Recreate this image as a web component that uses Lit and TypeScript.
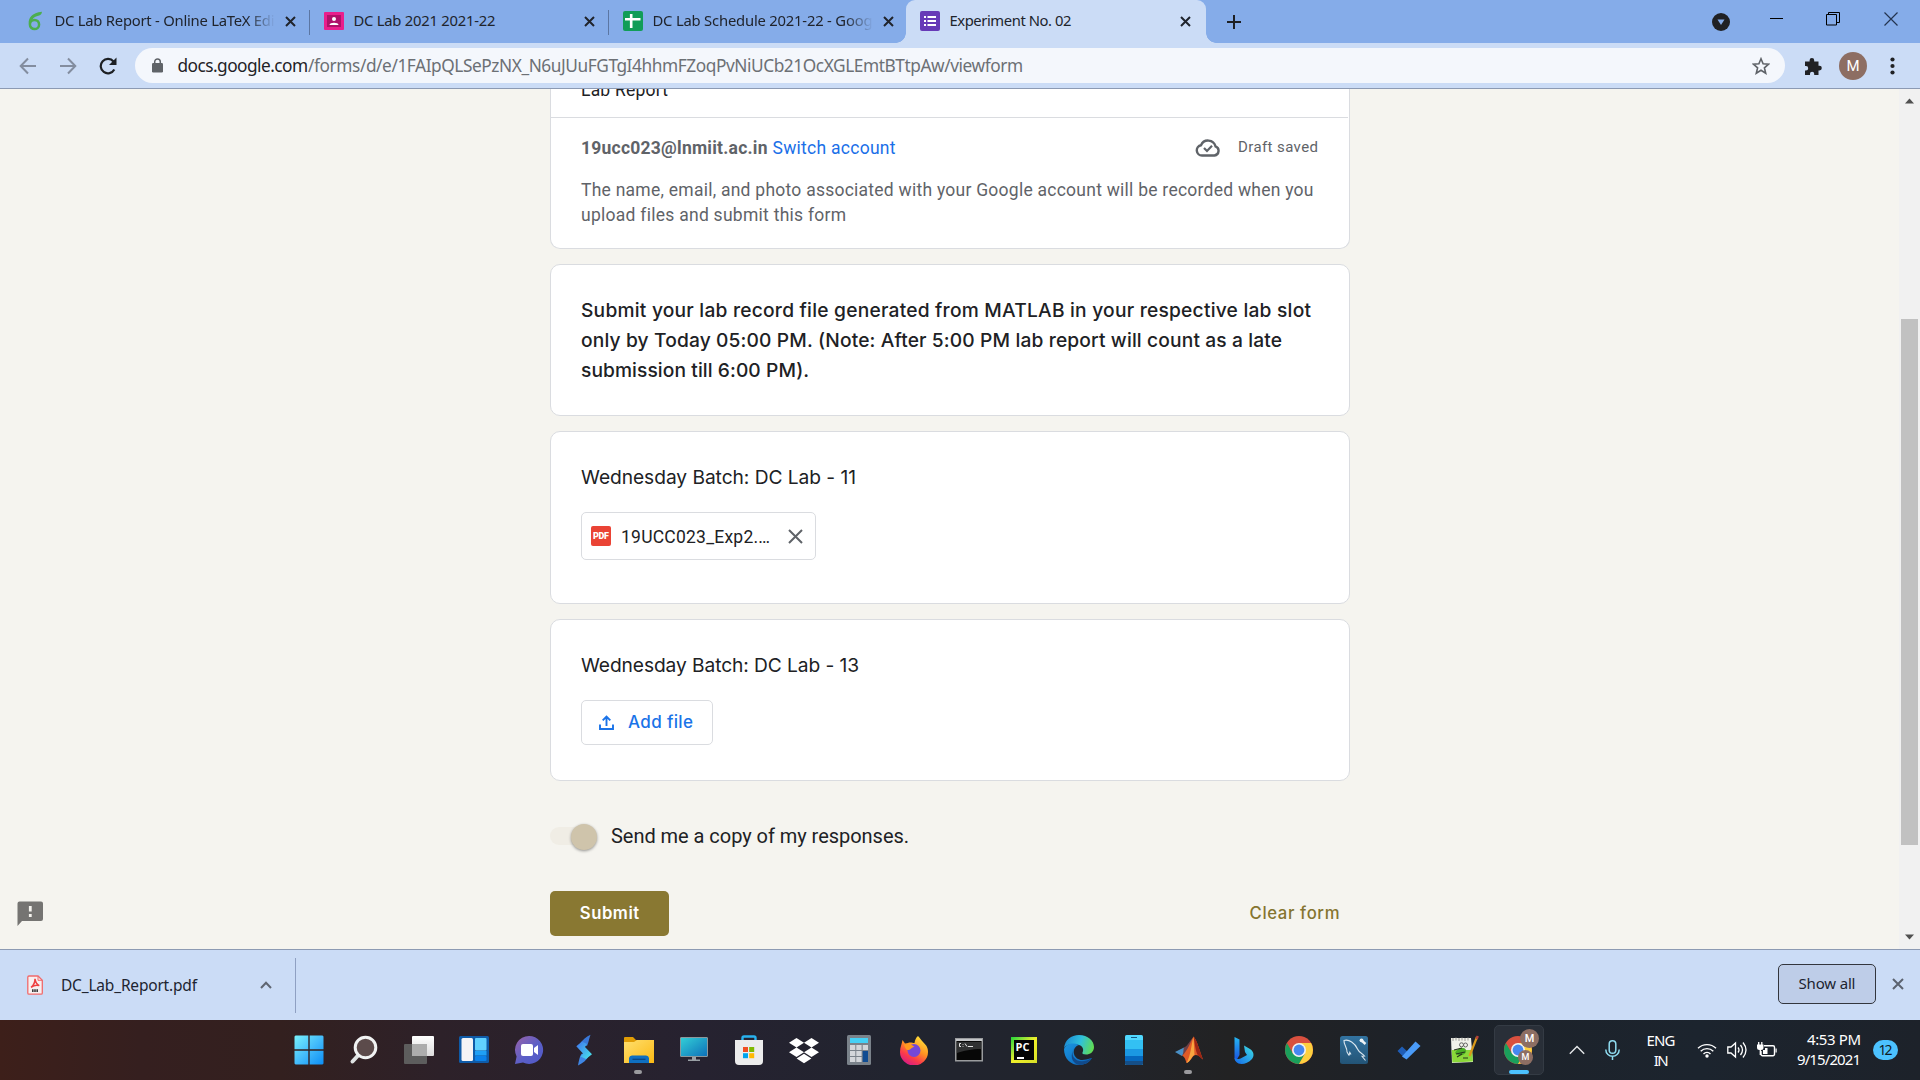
import { LitElement, html, svg, css, nothing } from "lit";
import { customElement, property } from "lit/decorators.js";
import { classMap } from "lit/directives/class-map.js";

/** One line of text whose tracking is adjusted so that it takes a given width. */
@customElement("fit-text")
class FitText extends LitElement {
  @property() text = "";
  @property({ type: Number }) w = 0;
  static styles = css`
    :host { display: inline-block; white-space: pre; flex: none; }
    .line { display: inline-block; }
  `;
  render() {
    return html`<span class="line">${this.text}</span>`;
  }
  updated() {
    const line = this.renderRoot.querySelector(".line") as HTMLElement;
    line.style.letterSpacing = "0px";
    const natural = line.getBoundingClientRect().width;
    const gaps = Math.max(1, this.text.length - 1);
    line.style.letterSpacing = (this.w - natural) / gaps + "px";
    this.style.width = this.w + "px";
  }
}

const icon = (w: number, h: number, body: unknown, box = `0 0 ${w} ${h}`) =>
  html`<svg width=${w} height=${h} viewBox=${box} fill="none">${body}</svg>`;

const cross = (size: number, color: string, sw: number) =>
  icon(size, size, svg`<path d="M1 1L${size - 1} ${size - 1}M${size - 1} 1L1 ${size - 1}" stroke=${color} stroke-width=${sw}/>`);

const favOverleaf = icon(20, 20, svg`
  <circle cx="9.500" cy="13.500" r="4.600" stroke="#4cae4f" stroke-width="2.500"/>
  <path d="M3.800 13C3 7 7 1.800 17 .8C16.800 3.400 15 4.600 12.500 5C9.500 5.600 7.500 7.500 7 10Z" fill="#4cae4f"/>`);
const favClass = icon(20, 20, svg`
  <rect width="20" height="18" y="1" rx="1" fill="#e91e8c"/><rect x="3" y="4" width="14" height="12" fill="#b0106a"/>
  <circle cx="10" cy="8" r="2" fill="#fff"/><path d="M5.500 14c0-3 9-3 9 0z" fill="#fff"/>`);
const favSheets = icon(20, 20, svg`
  <rect width="20" height="20" rx="2" fill="#119d58"/><path d="M8.200 3v14M2 8.200h15.500" stroke="#fff" stroke-width="2.600"/>`);
const favForms = icon(20, 20, svg`
  <rect width="20" height="20" rx="2" fill="#673ab7"/>
  <path d="M7.500 6h8.500M7.500 10h8.500M7.500 14h8.500M4 6h2M4 10h2M4 14h2" stroke="#fff" stroke-width="2"/>`);

const chromeBody = svg`
  <circle cx="14" cy="14" r="14" fill="#d9503f"/>
  <path d="M1.900 7A14 14 0 0 0 14 28L20.100 17.500H7.900Z" fill="#1a9f5b"/>
  <path d="M26.100 7A14 14 0 0 1 14 28L20.100 17.500L14 7Z" fill="#fdd03f"/>
  <circle cx="14" cy="14" r="7" fill="#f2f2f2"/><circle cx="14" cy="14" r="5.400" fill="#4688f0"/>`;

const start = icon(30, 30, svg`
  <defs><linearGradient id="wg" x1="0" y1="0" x2="30" y2="30" gradientUnits="userSpaceOnUse"><stop stop-color="#7af3fb"/><stop offset=".5" stop-color="#45bdfb"/><stop offset="1" stop-color="#0a8cf5"/></linearGradient></defs>
  <path d="M1.500.5H14.300V14.300H.5V1.500zM15.700.5H28.500L29.500 1.500V14.300H15.700zM.5 15.700H14.300V29.500H1.500L.5 28.500zM15.700 15.700H29.500V28.500L28.500 29.500H15.700z" fill="url(#wg)"/>`);
const search = icon(30, 30, svg`
  <path d="M9.500 20L3.500 26.500" stroke="#dfe3e3" stroke-width="4" stroke-linecap="round"/>
  <circle cx="16.500" cy="12.500" r="10.300" fill="#5c4b4b" stroke="#f1f3f3" stroke-width="3"/>`);
const taskView = icon(32, 30, svg`
  <defs><linearGradient id="tv" x1="0" y1="0" x2="0" y2="1"><stop stop-color="#fff"/><stop offset="1" stop-color="#dcdcdc"/></linearGradient></defs>
  <rect x="9" y="1" width="22" height="20" rx="1" fill="url(#tv)"/>
  <rect x="1" y="9" width="23" height="20" rx="1" fill="#5d5d5d"/><rect x="9" y="9" width="15" height="12" fill="#adadad"/>`);
const widgets = icon(30, 30, svg`
  <rect y="1" width="30" height="27" rx="1.500" fill="#0f5ba8"/><rect x="2.500" y="3" width="11.500" height="23" rx="1.500" fill="#f4f4f6"/>
  <rect x="16" y="3" width="11.500" height="12.500" rx="1" fill="#61d1ff"/><rect x="16" y="16" width="11.500" height="4.500" fill="#1fa0f5"/><rect x="16" y="21" width="11.500" height="5" rx="1" fill="#0b82ea"/>`);
const chat = icon(30, 30, svg`
  <defs><linearGradient id="ch" x1="0" y1="0" x2="1" y2="1"><stop stop-color="#9a62a8"/><stop offset=".55" stop-color="#5b5fc7"/><stop offset="1" stop-color="#5059c9"/></linearGradient></defs>
  <path d="M15 1a14 14 0 1 1-6 26.600L1 29L2.600 21.500A14 14 0 0 1 15 1z" fill="url(#ch)"/>
  <rect x="7" y="9" width="12" height="12" rx="2" fill="#fff"/><path d="M20 13l4-3v10l-4-3z" fill="#fff"/>`);
const bolt = icon(20, 32, svg`
  <defs><linearGradient id="bo" x1="2" y1="10" x2="17" y2="22" gradientUnits="userSpaceOnUse"><stop stop-color="#3f79ee"/><stop offset="1" stop-color="#47dcea"/></linearGradient></defs>
  <path d="M16.500.8C12 3 8 6.500 6 9.500L13 12C14.500 9 15 5 16.500.8z" fill="#3a78d8"/>
  <path d="M4 31.500C9 29 12.500 26 14.500 22.500L8 19.500C5.500 22 5 27 4 31.500z" fill="#3f86e4"/>
  <path d="M8 7.500L2.300 12.300L9 19.500L6.500 22.500L12 25L18 20.200L11 13L13 10z" fill="url(#bo)"/>`);
const folder = icon(30, 28, svg`
  <path d="M0 2a1 1 0 0 1 1-1H9l3 3h17v9H0z" fill="#e09c05"/>
  <defs><linearGradient id="fo" x1="0" y1="0" x2="1" y2="1"><stop stop-color="#ffdf6e"/><stop offset="1" stop-color="#fbb914"/></linearGradient></defs>
  <path d="M0 6h10l3-2h17v23H0z" fill="url(#fo)"/><path d="M5 27v-5a3 3 0 0 1 3-2.500h14a3 3 0 0 1 3 2.500v5z" fill="#0f6fc0"/><path d="M8.500 23.300h13" stroke="#0a4583" stroke-width="1.300"/>`);
const monitor = icon(28, 28, svg`
  <defs><linearGradient id="mo" x1="0" y1="0" x2="1" y2="1"><stop stop-color="#33d0d7"/><stop offset="1" stop-color="#0d6fb9"/></linearGradient></defs>
  <rect x=".5" y="1.500" width="27" height="19" rx=".5" fill="url(#mo)" stroke="#8c979c"/>
  <path d="M12 21h4v2.500h4V25H8v-1.500h4z" fill="#9aa0a5"/>`);
const store = icon(30, 30, svg`
  <path d="M8.500 7V3a1.500 1.500 0 0 1 1.500-1.500H20A1.500 1.500 0 0 1 21.500 3V7" stroke="#28b2ee" stroke-width="2.400"/>
  <path d="M1 5h28v21a4 4 0 0 1-4 4H5a4 4 0 0 1-4-4z" fill="#ececec"/>
  <path d="M9 12h5v5H9z" fill="#f04e23"/><path d="M15.200 12h5v5h-5z" fill="#7fba00"/><path d="M9 18.200h5v5H9z" fill="#00a4ef"/><path d="M15.200 18.200h5v5h-5z" fill="#ffb900"/>`);
const dropbox = icon(30, 27, svg`
  <path d="M7.500 1L15 5.700L7.500 10.500L0 5.700zM22.500 1L30 5.700L22.500 10.500L15 5.700zM7.500 10.500L15 15.300L7.500 20L0 15.300zM22.500 10.500L30 15.300L22.500 20L15 15.300zM15 16.800L22.400 21.500L15 26.200L7.600 21.500z" fill="#fff"/>`);
const calc = icon(24, 30, svg`
  <rect width="24" height="30" rx="1.500" fill="#7a828a"/><rect x="3" y="3" width="18" height="5" fill="#45d0f5"/>
  <path d="M3 10h5.300v5H3zM9.300 10h5.300v5H9.300zM15.700 10H21v5h-5.300zM3 16h5.300v5H3zM9.300 16h5.300v5H9.300zM3 22h5.300v5H3zM9.300 22h5.300v5H9.300z" fill="#d3d6da"/><path d="M15.700 16H21v11h-5.300z" fill="#104c92"/>`);
const firefox = icon(30, 30, svg`
  <defs><linearGradient id="ff" x1="24" y1="2" x2="8" y2="29" gradientUnits="userSpaceOnUse"><stop stop-color="#ffe53b"/><stop offset=".45" stop-color="#ff9322"/><stop offset=".75" stop-color="#fb3b4a"/><stop offset="1" stop-color="#d91d83"/></linearGradient></defs>
  <path d="M19 1c2 2 3 4 5 6 4 4 5 6 5 10a14 13.500 0 0 1-28 0C1 12 3 9 3.500 5L6 8.500L9 8C11 7 14 8 15.500 8 16 5 17 2.500 19 1z" fill="url(#ff)"/>
  <circle cx="15" cy="15.500" r="6.500" fill="#7548d8"/><path d="M5 9.500c4-1.500 8 0 10.500 2.500-3 0-3 2.500-6 3-2 .5-3.500-2-4.500-5.500z" fill="#ff9a1f"/>`);
const cmd = icon(28, 24, svg`
  <rect x=".75" y=".75" width="26.500" height="22" fill="#070707" stroke="#9a9c9e" stroke-width="1.500"/><path d="M1 2h26" stroke="#c3c5c8" stroke-width="2"/>
  <path d="M2 4h24v7C17 11 8 13 2 15z" fill="#303132"/>
  <path d="M6 5.500H4.500v3H6M8 6v.7M8 8v.7M10 5.500l2 3M13 8.500h5" stroke="#e4e4e4"/>`);
const pycharm = html`<span class="pc"><span class="pcin">PC<i></i></span></span>`;
const edge = icon(30, 30, svg`
  <defs><linearGradient id="e1" x1="2" y1="5" x2="29" y2="14" gradientUnits="userSpaceOnUse"><stop stop-color="#1e8fd5"/><stop offset=".5" stop-color="#2fc0dd"/><stop offset="1" stop-color="#62dd50"/></linearGradient><linearGradient id="e2" x1="0" y1="0" x2="1" y2="1"><stop stop-color="#1b95e0"/><stop offset="1" stop-color="#0a61b8"/></linearGradient></defs>
  <path d="M0 13C1 5 7 0 15 0c9 0 15 6 15 12 0 5-4 7.500-8 7.500-3 0-4-1-3.500-2C20 15 19 11 15 10 9 8 3 9 0 13z" fill="url(#e1)"/>
  <path d="M0 14C2 9 9 7 15 10c-4 1-6 5-5 9 1.500 5 6 7 12 5.500C25 24 27 23 28 23c-3 5-8 7-13 7C7 30 0 24 0 14z" fill="url(#e2)"/>
  <path d="M12 12c-3 2-4.500 6-2.500 10 3 5 11 6 18 1-1 3-6 7-11.500 7C7 29 5 18 12 12z" fill="#114a8b"/>`);
const phone = icon(18, 30, svg`
  <rect width="18" height="30" rx="1.500" fill="#51d9ff"/><path d="M0 5h18v9H0z" fill="#33c0f3"/><path d="M0 14h18v7H0z" fill="#1b98e2"/><path d="M0 21h18v5H0z" fill="#0668be"/><path d="M0 26h18v2.500a1.500 1.500 0 0 1-1.500 1.500h-15A1.500 1.500 0 0 1 0 28.500z" fill="#154f88"/><path d="M6 2.500h6" stroke="#145a86"/>`);
const matlab = icon(30, 30, svg`
  <path d="M1 17L10 12.500L14 15L8 21z" fill="#4a90c6"/><path d="M10 12.500C14 11 16 5 19.500 2L14 17L8 21C10 18 9 15 10 12.500z" fill="#6f3f46"/>
  <path d="M19.500 1.500C16 8 14 15 8 21c2 0 3 2 4.500 7C17 27 18 20 22 20c3 0 5 3 7 4.500C26 17 23 5 19.500 1.500z" fill="#df5a26"/>
  <path d="M19.500 1.500C17 11 17 20 12.500 28c4-1 5-7 8-8z" fill="#f8a640"/><path d="M19.500 1.500C21 9 21 15 24 20.500L29 24.500C26 17 23 5 19.500 1.500z" fill="#9c2515"/>`);
const bing = icon(22, 30, svg`
  <defs><linearGradient id="bi" x1="0" y1="0" x2="0" y2="1"><stop stop-color="#25b7f2"/><stop offset="1" stop-color="#1a4fe0"/></linearGradient><linearGradient id="bj" x1="1" y1="0" x2="0" y2="1"><stop stop-color="#3ee0e2"/><stop offset="1" stop-color="#1468ea"/></linearGradient></defs>
  <path d="M1.500 2L6.500 4.500V20L3 26Q1.500 25 1.500 22z" fill="url(#bi)"/>
  <path d="M11 10.500L17 14c4 2.500 4.500 7 2 10-3 3.500-7 5-10.500 5C4 29 1.500 26 1.500 22.500c2 2.500 5 1.500 7 .500L14 20L12 17z" fill="url(#bj)"/>`);
const chrome = icon(28, 28, chromeBody);
const mysql = icon(28, 28, svg`
  <defs><linearGradient id="my" x1="0" y1="0" x2="0" y2="1"><stop stop-color="#3273a0"/><stop offset="1" stop-color="#235476"/></linearGradient></defs>
  <rect width="28" height="28" rx="2.500" fill="url(#my)"/>
  <path d="M9 19.500L7 16C7.500 12 3.500 8 4 4.500C9 3 15 7 17.500 13C19 16.500 22.500 17.500 24.500 20L22 20.300L25.500 24.500M9 19.500L9.800 16.500L11 18.500" stroke="#dbe7ef" stroke-width="1.100"/>
  <path d="M21.500 4.500L25.500 8" stroke="#eef3f6" stroke-width="2.400"/><circle cx="21.500" cy="4.300" r="1.900" fill="#eef3f6"/>`);
const todo = icon(24, 20, svg`<path d="M.5 11L5 6.500L12 13L7.500 18z" fill="#1f5db5"/><path d="M5 16.500L18.500 1.500L23.500 6L9.500 19.500z" fill="#4a9bf8"/>`);
const npp = icon(30, 30, svg`
  <path d="M2 3h20l2 24-21 1z" fill="#f1f2ea"/><path d="M2.700 15h20.400l.9 11.500L3.300 27.500z" fill="#8bd83a"/>
  <path d="M4 3v3M7 2.500v3M10 3v3M13 2.500v3M16 3v3M19 2.500v3" stroke="#9a9a96"/>
  <path d="M6 18c2-5 9-7 11-3 1 4-4 6-8 5z" fill="#4cae26"/><circle cx="12.500" cy="9.800" r="2" stroke="#666"/><circle cx="16.500" cy="10" r="2" stroke="#666"/>
  <path d="M5 15l8-2M7 19l9-2M8 22l5-3M14 23h5" stroke="#27361c" stroke-width="1.100"/><path d="M28 2L20.500 21" stroke="#d99a1c" stroke-width="2.200"/><path d="M28.800 1L27.600 4" stroke="#b6433b" stroke-width="2.400"/>`);
const chromeProfile = html`<span class="prof">${chrome}<b class="m1">M</b><b class="m2">M</b></span>`;

const apps: { art: unknown; mark?: string }[] = [
  { art: start }, { art: search }, { art: taskView }, { art: widgets }, { art: chat }, { art: bolt },
  { art: folder, mark: "dot" }, { art: monitor }, { art: store }, { art: dropbox }, { art: calc },
  { art: firefox }, { art: cmd }, { art: pycharm }, { art: edge }, { art: phone },
  { art: matlab, mark: "dot" }, { art: bing }, { art: chrome }, { art: mysql }, { art: todo },
  { art: npp }, { art: chromeProfile, mark: "bar" },
];

const tabs = [
  { fav: favOverleaf, text: "DC Lab Report - Online LaTeX Edi", w: 220, fade: true, rule: true },
  { fav: favClass, text: "DC Lab 2021 2021-22", w: 142, fade: false, rule: true },
  { fav: favSheets, text: "DC Lab Schedule 2021-22 - Goog", w: 220, fade: true, rule: false },
  { fav: favForms, text: "Experiment No. 02", w: 122, fade: false, rule: false, active: true },
];

@customElement("browser-chrome")
class BrowserChrome extends LitElement {
  static styles = css`
    :host { display: block; flex: none; font-family: "Noto Sans", "Open Sans", sans-serif; }
    svg { display: block; flex: none; }
    .strip { height: 43px; background: #85ace9; display: flex; padding-left: 10px; box-sizing: border-box; }
    .tab { width: 299px; height: 43px; display: flex; align-items: center; padding: 0 0 2px 15px; box-sizing: border-box; font-size: 14.8px; line-height: 20px; color: #20242c; flex: none; position: relative; }
    .tab.active { background: #cbdcf6; border-radius: 9px 9px 0 0; padding-left: 14px; margin-left: -1px; width: 300px; }
    .tab.active::before, .tab.active::after { content: ""; position: absolute; bottom: 0; width: 10px; height: 10px; }
    .tab.active::before { left: -10px; background: radial-gradient(circle at 0 0, transparent 9.500px, #cbdcf6 10px); }
    .tab.active::after { right: -10px; background: radial-gradient(circle at 100% 0, transparent 9.500px, #cbdcf6 10px); }
    .title { margin: -2px 0 0 9.500px; width: 220px; overflow: hidden; flex: none; height: 20px; }
    .fade { -webkit-mask-image: linear-gradient(90deg, #000 192px, transparent 220px); mask-image: linear-gradient(90deg, #000 192px, transparent 220px); }
    .x { margin-left: 10px; margin-top: 2px; }
    .rule { margin: 4px -1px 0 auto; width: 1px; height: 25px; background: #5b76a3; }
    .plus { margin: 15px 0 0 21px; }
    .win { margin-left: auto; display: flex; align-items: flex-start; padding-right: 22px; }
    .win svg:nth-child(1) { margin: 13px 40px 0 0; }
    .win svg:nth-child(2) { margin: 12px 43px 0 0; }
    .win svg:nth-child(3) { margin: 12px 44px 0 0; }
    .win svg:nth-child(4) { margin: 12px 0 0 0; }
    .bar { height: 46px; box-sizing: border-box; background: #cbdcf6; border-bottom: 1px solid #8c9ab3; display: flex; align-items: center; padding: 0 25px 0 19px; }
    .nav { display: flex; gap: 22px; width: 116px; }
    .omni { flex: 1; height: 35px; border-radius: 18px; background: #f4f7fc; display: flex; align-items: center; padding: 0 15px 0 17px; font-size: 17.3px; line-height: 24px; color: #6c7075; }
    .host { color: #1f2226; margin-left: 14.500px; }
    .star { margin-left: auto; }
    .ext { margin: 0 16px 0 18px; }
    .me { width: 28px; height: 28px; border-radius: 50%; background: #8d6e63; color: #fff; font: 15px/28px Roboto, sans-serif; text-align: center; margin-right: 23px; }
  `;
  render() {
    return html`
      <div class="strip">
        ${tabs.map((t) => html`
          <div class=${classMap({ tab: true, active: !!t.active })}>
            ${t.fav}
            <div class=${classMap({ title: true, fade: t.fade })}><fit-text .text=${t.text} .w=${t.w}></fit-text></div>
            <div class="x">${cross(11, "#20242c", 2)}</div>
            ${t.rule ? html`<div class="rule"></div>` : nothing}
          </div>`)}
        <div class="plus">${icon(14, 14, svg`<path d="M7 0v14M0 7h14" stroke="#1c1f24" stroke-width="2"/>`)}</div>
        <div class="win">
          ${icon(18, 18, svg`<circle cx="9" cy="9" r="9" fill="#202124"/><path d="M5.500 6.500h7L9 12z" fill="#85ace9"/>`)}
          ${icon(13, 13, svg`<path d="M0 6.500h13" stroke="#000"/>`)}
          ${icon(14, 14, svg`<path d="M.5 2.500h10v10.500H.5zM2.500 2.500V.5h11v10h-2.500" stroke="#000"/>`)}
          ${icon(14, 14, svg`<path d="M.5.5l13 13M13.500.5l-13 13" stroke="#24344f" stroke-width="1.200"/>`)}
        </div>
      </div>
      <div class="bar">
        <div class="nav">
          ${icon(18, 18, svg`<path d="M17 9H2M9 1.500L1.700 9L9 16.500" stroke="#838d9f" stroke-width="2"/>`)}
          ${icon(18, 18, svg`<path d="M1 9h15M9 1.500L16.300 9L9 16.500" stroke="#838d9f" stroke-width="2"/>`)}
          ${icon(18, 18, svg`<path d="M15.300 12.500A7.200 7.200 0 1 1 14.500 4.500" stroke="#1d2024" stroke-width="2.200"/><path d="M17.500 0.500V8H10z" fill="#1d2024"/>`)}
        </div>
        <div class="omni">
          ${icon(11, 15, svg`<rect y="5" width="11" height="9.500" rx="1.200" fill="#5f6368"/><path d="M2.700 6V3.800a2.800 2.800 0 0 1 5.600 0V6" stroke="#5f6368" stroke-width="1.500"/>`)}
          <fit-text class="host" text="docs.google.com" .w=${130.6}></fit-text><fit-text
            text="/forms/d/e/1FAIpQLSePzNX_N6uJUuFGTgI4hhmFZoqPvNiUCb21OcXGLEmtBTtpAw/viewform" .w=${715}></fit-text>
          <div class="star">${icon(18, 18, svg`<path d="M9 1.800L11.100 6.800L16.600 7.200L12.400 10.800L13.700 16.200L9 13.300L4.300 16.200L5.600 10.800L1.400 7.200L6.900 6.800Z" stroke="#5f6368" stroke-width="1.600"/>`)}</div>
        </div>
        <div class="ext">${icon(20, 20, svg`<path d="M2 5.500h4.600V4.300a2.300 2.300 0 0 1 4.600 0V5.500h4.300v4.300h1a2.300 2.300 0 0 1 0 4.600h-1V19h-4.300v-1.200a2.100 2.100 0 0 0-4.200 0V19H2v-4.600h1a2.200 2.200 0 0 0 0-4.400H2z" fill="#202124"/>`)}</div>
        <div class="me">M</div>
        ${icon(5, 18, svg`<circle cx="2.500" cy="2.500" r="2.100" fill="#202124"/><circle cx="2.500" cy="9" r="2.100" fill="#202124"/><circle cx="2.500" cy="15.500" r="2.100" fill="#202124"/>`)}
      </div>`;
  }
}

@customElement("form-page")
class FormPage extends LitElement {
  static styles = css`
    :host { display: flex; height: 860px; flex: none; background: #f5f4ef; overflow: hidden; font-family: Roboto, sans-serif; }
    svg { display: block; flex: none; }
    fit-text { display: block; }
    .side { width: 550px; box-sizing: border-box; padding: 811px 0 0 16px; flex: none; }
    .col { width: 800px; flex: none; }
    .track { margin-left: auto; width: 21px; background: #f1f1f1; display: flex; flex-direction: column; align-items: center; padding: 9px 0; box-sizing: border-box; }
    .thumb { width: 17px; height: 526px; background: #c1c1c1; margin-top: 215px; }
    .down { margin-top: auto; }
    .card { background: #fff; border: 1px solid #dadce0; border-radius: 10px; box-sizing: border-box; padding: 30px 30px 0; margin-bottom: 15px; color: #202124; font: 500 19.200px/30px Inter, sans-serif; }
    .top { border-top: 0; border-radius: 0 0 10px 10px; height: 160px; padding: 0; font: 17.5px/25px Roboto, sans-serif; color: #5f6368; }
    .cut { height: 28px; border-bottom: 1px solid #dadce0; padding-left: 30px; overflow: hidden; color: #202124; box-sizing: content-box; margin-right: 1px; }
    .cut fit-text { margin-top: -11.500px; }
    .acct { padding: 17.500px 31px 0 30px; display: flex; align-items: center; }
    .mail { font-weight: 700; }
    .switch { color: #1a6fe8; margin-left: 5px; }
    .cloud { margin-left: auto; margin-right: 17px; margin-top: -1px; }
    .draft { font-size: 15px; margin-top: -2px; }
    .para { padding: 17px 0 0 30px; }
    .c2 { height: 152px; } .c3 { height: 173px; } .c4 { height: 162px; }
    .q { font-weight: 400; }
    .chip { margin-top: 20px; width: 235px; height: 48px; box-sizing: border-box; border: 1px solid #dadce0; border-radius: 5px; display: flex; align-items: center; padding: 0 12px 0 9px; font: 17.5px/24px Roboto, sans-serif; }
    .chip fit-text { margin: 2px 0 0 10px; }
    .chip .rm { margin-left: auto; }
    .pdf { width: 20px; height: 20px; border-radius: 2px; background: #ea4335; color: #fff; font: 900 9px/20px Roboto, sans-serif; display: flex; justify-content: center; }
    .chip .pdf fit-text { margin: 0; }
    .add { margin-top: 20px; width: 132px; height: 45px; box-sizing: border-box; border: 1px solid #dadce0; border-radius: 5px; display: flex; align-items: center; padding: 0 0 1px 17px; gap: 14px; color: #1a73e8; font: 500 17px/24px Inter, sans-serif; }
    .copy { display: flex; align-items: center; height: 30px; margin-top: 40px; font-size: 20px; line-height: 30px; color: #202124; }
    .toggle { width: 48px; height: 18px; position: relative; margin-right: 13px; }
    .rail { width: 44px; height: 18px; border-radius: 9px; background: #f0ede5; }
    .knob { position: absolute; left: 20.500px; top: -3.500px; width: 26px; height: 26px; border-radius: 50%; background: #cfc4ab; box-shadow: 0 1px 3px rgba(0,0,0,.4); }
    .acts { display: flex; justify-content: space-between; align-items: center; margin-top: 40px; height: 45px; font: 600 16.700px/24px Inter, sans-serif; color: #857430; padding-right: 10.500px; }
    .submit { width: 119px; height: 45px; border-radius: 5px; background: #897832; color: #fff; display: flex; align-items: center; justify-content: center; }
    .submit fit-text, .clear { margin-top: -1px; }
    .clear { font-weight: 500; }
  `;
  render() {
    return html`
      <div class="side">${icon(28, 28, svg`<path d="M1.500 3.500a2 2 0 0 1 2-2h21.500a2 2 0 0 1 2 2V19a2 2 0 0 1-2 2H6L1.500 26z" fill="#757472"/><path d="M14.300 6v5.500M14.300 14v3" stroke="#f5f4ef" stroke-width="2.800"/>`)}</div>
      <div class="col">
        <div class="card top">
          <div class="cut"><fit-text text="Lab Report" .w=${87}></fit-text></div>
          <div class="acct">
            <fit-text class="mail" text="19ucc023@lnmiit.ac.in" .w=${186.5}></fit-text>
            <fit-text class="switch" text="Switch account" .w=${123}></fit-text>
            <div class="cloud">${icon(26, 18, svg`<path d="M7 16.500H19.500A4.800 4.800 0 0 0 20.500 7.300A7.700 7.700 0 0 0 6 6.200A5.200 5.200 0 0 0 7 16.500Z" stroke="#5f6368" stroke-width="2.400"/><path d="M9 9l3 3 5-5.200" stroke="#5f6368" stroke-width="2.200"/>`)}</div>
            <fit-text class="draft" text="Draft saved" .w=${80}></fit-text>
          </div>
          <div class="para">
            <fit-text text="The name, email, and photo associated with your Google account will be recorded when you" .w=${732.5}></fit-text>
            <fit-text text="upload files and submit this form" .w=${264.5}></fit-text>
          </div>
        </div>
        <div class="card c2">
          <fit-text text="Submit your lab record file generated from MATLAB in your respective lab slot" .w=${730}></fit-text>
          <fit-text text="only by Today 05:00 PM. (Note: After 5:00 PM lab report will count as a late" .w=${701}></fit-text>
          <fit-text text="submission till 6:00 PM)." .w=${228}></fit-text>
        </div>
        <div class="card c3">
          <fit-text class="q" text="Wednesday Batch: DC Lab - 11" .w=${275}></fit-text>
          <div class="chip"><div class="pdf"><fit-text text="PDF" .w=${16}></fit-text></div><fit-text text="19UCC023_Exp2.…" .w=${149}></fit-text><div class="rm">${cross(15, "#5f6368", 2)}</div></div>
        </div>
        <div class="card c4">
          <fit-text class="q" text="Wednesday Batch: DC Lab - 13" .w=${278}></fit-text>
          <div class="add">${icon(15, 15, svg`<path d="M1 9.500V14h13V9.500M7.500 11V2M3.700 5.300L7.500 1.500L11.300 5.300" stroke="#1a73e8" stroke-width="1.900"/>`)}<fit-text text="Add file" .w=${65}></fit-text></div>
        </div>
        <div class="copy"><div class="toggle"><div class="rail"></div><div class="knob"></div></div><fit-text text="Send me a copy of my responses." .w=${298}></fit-text></div>
        <div class="acts"><div class="submit"><fit-text text="Submit" .w=${59.5}></fit-text></div><fit-text class="clear" text="Clear form" .w=${90}></fit-text></div>
      </div>
      <div class="track">
        ${icon(9, 6, svg`<path d="M0 5.500L4.500.5L9 5.500z" fill="#505050"/>`)}
        <div class="thumb"></div>
        <div class="down">${icon(9, 6, svg`<path d="M0 .5h9L4.500 5.500z" fill="#505050"/>`)}</div>
      </div>`;
  }
}

@customElement("download-shelf")
class DownloadShelf extends LitElement {
  static styles = css`
    :host { display: flex; align-items: center; flex: none; height: 71px; box-sizing: border-box; border-top: 1px solid #8c9ab3; background: #cbdcf6; font: 15.500px/20px "Noto Sans", "Open Sans", sans-serif; color: #202430; padding: 0 16px 0 27px; }
    svg { display: block; flex: none; }
    .name { margin-left: 18px; }
    .up { margin-left: 63px; }
    .rule { width: 1px; height: 55px; background: #8fa0c2; margin-left: 23px; }
    .all { margin-left: auto; width: 98px; height: 40px; box-sizing: border-box; border: 1px solid #33363d; border-radius: 5px; background: #becde8; display: flex; align-items: center; justify-content: center; font-size: 15px; margin-top: -2px; padding-bottom: 2px; }
    .close { margin: -2px 0 0 16px; }
  `;
  render() {
    return html`
      ${icon(16, 20, svg`<path d="M2 1h9l4.300 4.300V18a1.200 1.200 0 0 1-1.200 1.200H2A1.200 1.200 0 0 1 .8 18V2.200A1.200 1.200 0 0 1 2 1z" fill="#f8f0f1" stroke="#f06a6c" stroke-width="1.300"/><path d="M11 1v4.300h4.300" stroke="#f06a6c"/><path d="M8 3.800C8.500 7 10 9.500 12.300 10.600C9 9.700 6 10.800 4 12.300C6.500 10.500 8 7.500 8 3.800z" stroke="#ee3f40" stroke-width="1.500"/><path d="M5 15.600h6.500" stroke="#3d3d3d" stroke-width="2.600" stroke-dasharray="1.600 .6"/>`)}
      <fit-text class="name" text="DC_Lab_Report.pdf" .w=${136}></fit-text>
      <div class="up">${icon(12, 8, svg`<path d="M1 7l5-5.200L11 7" stroke="#5f6672" stroke-width="2"/>`)}</div>
      <div class="rule"></div>
      <div class="all"><fit-text text="Show all" .w=${57}></fit-text></div>
      <div class="close">${cross(12, "#5c6370", 2)}</div>`;
  }
}

@customElement("task-bar")
class TaskBar extends LitElement {
  static styles = css`
    :host { display: flex; flex: none; height: 60px; box-sizing: border-box; padding: 0 22px 0 281px; color: #fff; font: 15px/20px "Noto Sans", "Open Sans", sans-serif;
      background: linear-gradient(90deg, #3d1f1a 0, #351f1f 140px, #33201f 280px, #2d2129 440px, #262230 700px, #21242f 900px, #21242c 1080px, #222223 1230px, #1d2229 1420px, #1c242e 1700px, #1d222a 1920px); }
    svg { display: block; flex: none; }
    .app { width: 55px; height: 60px; flex: none; display: flex; align-items: center; justify-content: center; position: relative; }
    .bar::before { content: ""; position: absolute; left: 3px; top: 5px; width: 48px; height: 48px; border: 1px solid #343b44; border-radius: 5px; background: #292f38; }
    .mark { position: absolute; left: 23px; top: 50px; width: 8px; height: 4px; border-radius: 2px; background: #9a9a9e; }
    .bar .mark { left: 18px; width: 20px; background: #4cc2ff; }
    .prof { position: relative; margin-left: -1px; }
    .prof b { position: absolute; border-radius: 50%; background: #8d6e63; color: #fff; text-align: center; font-family: Roboto, sans-serif; font-weight: 500; }
    .m1 { left: 16px; top: -7px; width: 19px; height: 19px; font-size: 11px; line-height: 19px; }
    .m2 { left: 14px; top: 14px; width: 15px; height: 15px; font-size: 9px; line-height: 15px; }
    .pc { width: 26px; height: 26px; background: linear-gradient(135deg, #21d738 0, #7be03a 22%, #f0f02a 50%, #d6df28 100%); display: flex; align-items: center; justify-content: center; }
    .pcin { width: 20px; height: 20px; background: #050505; color: #fff; font: 700 11px/13px "Open Sans", sans-serif; padding-left: 2px; box-sizing: border-box; }
    .pcin i { display: block; width: 7px; height: 1.500px; background: #fff; margin: 4px 0 0 1px; }
    .tray { margin-left: auto; display: flex; align-items: center; }
    .mic { margin-left: 20px; } .lang { margin-left: 26px; text-align: center; padding-bottom: 1px; width: 29px; }
    .lang fit-text, .when fit-text { display: block; }
    .lang fit-text + fit-text { margin-left: 7px; }
    .wifi { margin-left: 22px; } .vol { margin-left: 10px; } .bat { margin-left: 10px; }
    .when { margin-left: 20px; display: flex; flex-direction: column; align-items: flex-end; padding-bottom: 2px; }
    .badge { margin-left: 12px; width: 25px; height: 20px; border-radius: 10px; background: #4cc2ff; color: #111c26; font-size: 14px; display: flex; align-items: center; justify-content: center; }
  `;
  render() {
    return html`
      ${apps.map((a) => html`<div class=${classMap({ app: true, bar: a.mark === "bar" })}>${a.art}${a.mark ? html`<div class="mark"></div>` : nothing}</div>`)}
      <div class="tray">
        ${icon(16, 10, svg`<path d="M.8 8.800L8 1.500l7.200 7.300" stroke="#e4e6e8" stroke-width="1.400"/>`)}
        <div class="mic">${icon(15, 20, svg`<rect x="4.200" y=".8" width="6.600" height="12.500" rx="3.300" stroke="#8fdcf0" stroke-width="1.500"/><path d="M.8 9.500c0 9 13.400 9 13.400 0M7.500 16v4" stroke="#8fdcf0" stroke-width="1.500"/>`)}</div>
        <div class="lang"><fit-text text="ENG" .w=${29}></fit-text><fit-text text="IN" .w=${15}></fit-text></div>
        <div class="wifi">${icon(20, 16, svg`<path d="M1 6.200a13 13 0 0 1 18 0M3.700 9.200a9 9 0 0 1 12.600 0M6.500 12a5 5 0 0 1 7 0" stroke="#fff" stroke-width="1.400"/><circle cx="10" cy="14" r="1.700" fill="#fff"/>`)}</div>
        <div class="vol">${icon(20, 18, svg`<path d="M.8 6H4l4.500-4v14L4 12H.8z" stroke="#fff" stroke-width="1.300"/><path d="M11 6.500q2 2.500 0 5M13.500 4q4 5 0 10M16 1.500q6 7.500 0 15" stroke="#fff" stroke-width="1.300"/>`)}</div>
        <div class="bat">${icon(20, 18, svg`<path d="M7 4.700h9a1.500 1.500 0 0 1 1.500 1.500v7a1.500 1.500 0 0 1-1.500 1.500H5.500A1.500 1.500 0 0 1 4 13.200V10" stroke="#fff" stroke-width="1.400"/><path d="M18.500 7.500h1.200v4h-1.200zM6 9h2V7h2.500v6H6z" fill="#fff"/><path d="M0 3.500h6.500v3A2.500 2.500 0 0 1 4 9H2.500A2.500 2.500 0 0 1 0 6.500z" fill="#fff"/><path d="M1.700 1v3M4.800 1v3M3.300 8v6" stroke="#fff" stroke-width="1.300"/>`)}</div>
        <div class="when"><fit-text text="4:53 PM" .w=${54}></fit-text><fit-text text="9/15/2021" .w=${64}></fit-text></div>
        <div class="badge"><fit-text text="12" .w=${14}></fit-text></div>
      </div>`;
  }
}

@customElement("app-root")
class AppRoot extends LitElement {
  static styles = css`
    :host { display: flex; flex-direction: column; width: 1920px; height: 1080px; overflow: hidden; }
  `;
  render() {
    return html`<browser-chrome></browser-chrome><form-page></form-page><download-shelf></download-shelf><task-bar></task-bar>`;
  }
}
